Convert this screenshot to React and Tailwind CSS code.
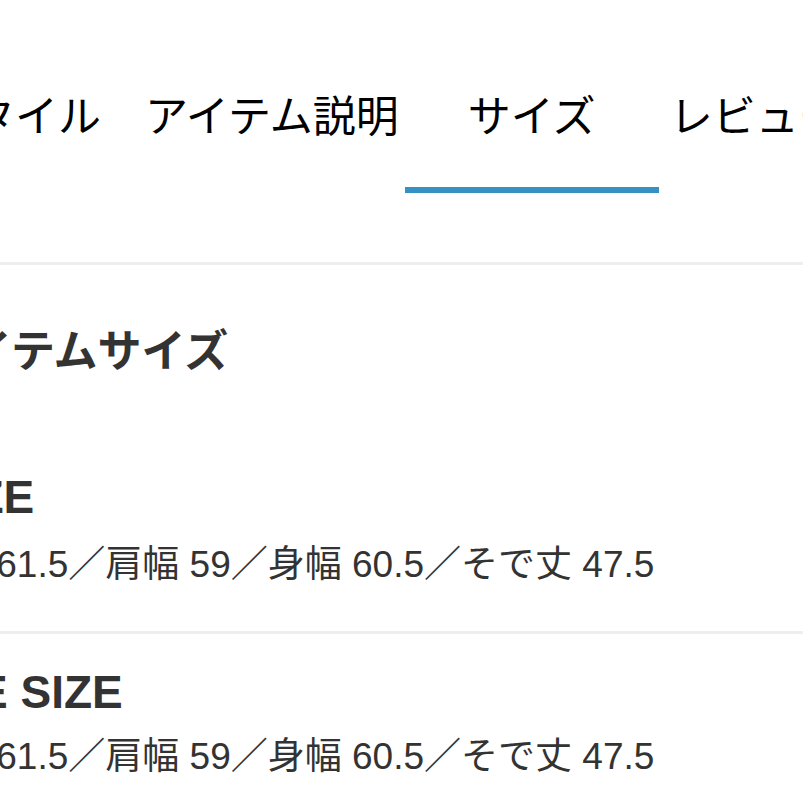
import React from 'react';

const sans = "font-['Liberation_Sans','Noto_Sans_CJK_JP',sans-serif]";

const SizeBlock = ({ title, titleOffset, value, topGap, bodyGap }) => (
  <div>
    <h3
      className={`${topGap} ${titleOffset} h-[46px] text-[46px] leading-[46px] font-bold text-[#333333] whitespace-nowrap`}
    >
      {title}
    </h3>
    <p className={`${bodyGap} ml-[-6px] h-[37px] text-[37px] leading-[37px] text-[#333333] whitespace-nowrap`}>
      {value}
    </p>
  </div>
);

export default function App() {
  const measure = '着丈 61.5／肩幅 59／身幅 60.5／そで丈 47.5';

  return (
    <div className={`w-[803px] h-[803px] overflow-hidden bg-white ${sans}`}>
      {/* Tabs */}
      <nav className="pt-[96px] flex items-start text-[43px] leading-[43px] text-black whitespace-nowrap">
        <div className="ml-[-71px] shrink-0">スタイル</div>
        <div className="ml-[44px] shrink-0">アイテム説明</div>
        <div className="ml-[6px] w-[254px] shrink-0 flex flex-col items-center">
          <span>サイズ</span>
          <span className="mt-[48px] h-[6px] w-full bg-[#3592c3]" />
        </div>
        <div className="ml-[11px] shrink-0">レビュー</div>
      </nav>

      <div className="mt-[69px] h-[3px] bg-[#eeeeee]" />

      {/* Item size */}
      <section className="ml-[-82px]">
        <h2 className="mt-[65px] ml-[8px] h-[44px] text-[44px] leading-[44px] font-bold text-[#333333] whitespace-nowrap">
          アイテムサイズ
        </h2>
        <SizeBlock
          title="SIZE"
          titleOffset="ml-[14px]"
          value={measure}
          topGap="mt-[100px]"
          bodyGap="mt-[26px]"
        />
      </section>

      <div className="mt-[48px] h-[3px] bg-[#eeeeee]" />

      <section className="ml-[-82px]">
        <SizeBlock
          title="ONE SIZE"
          titleOffset="ml-[-10px]"
          value={measure}
          topGap="mt-[35px]"
          bodyGap="mt-[23px]"
        />
      </section>
    </div>
  );
}
